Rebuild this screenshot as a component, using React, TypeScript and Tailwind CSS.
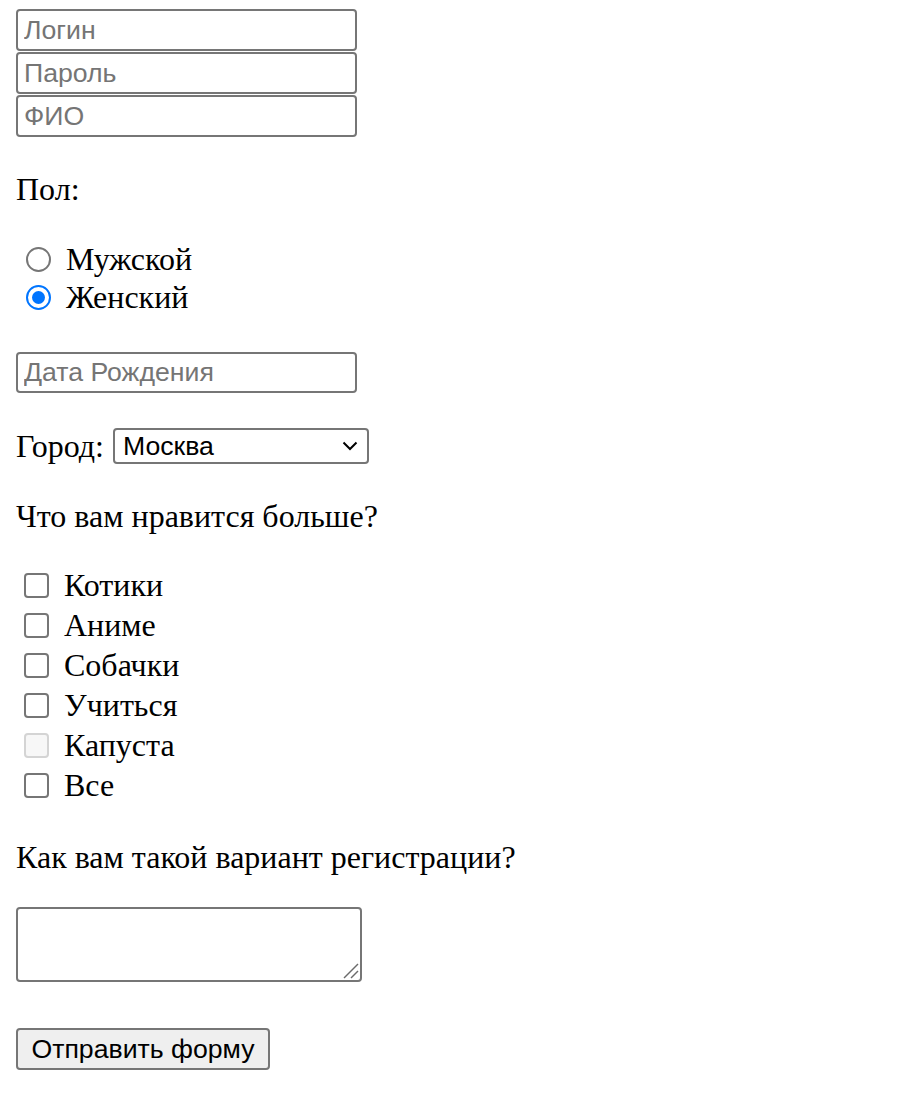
import React from "react";

const serif = "font-['Liberation_Serif','Times_New_Roman',serif]";
const sans = "font-['Liberation_Sans',Arial,sans-serif]";

function TextInput({ placeholder, h = "h-[42px]" }: { placeholder: string; h?: string }) {
  return (
    <input
      placeholder={placeholder}
      className={`${sans} block w-[341px] ${h} border-2 border-[#767676] rounded-[4px] px-[6px] text-[26.67px] text-black placeholder:text-[#757575] bg-white outline-none`}
    />
  );
}

function Radio({ checked }: { checked?: boolean }) {
  if (checked) {
    return (
      <div className="w-[25px] h-[25px] rounded-full border-[2.5px] border-[#0075ff] bg-white flex items-center justify-center shrink-0">
        <div className="w-[13px] h-[13px] rounded-full bg-[#0075ff]" />
      </div>
    );
  }
  return <div className="w-[25px] h-[25px] rounded-full border-2 border-[#767676] bg-white shrink-0" />;
}

function Checkbox({ disabled }: { disabled?: boolean }) {
  return (
    <div
      className={
        disabled
          ? "w-[25px] h-[25px] rounded-[4px] border-2 border-[#d4d4d4] bg-[#f7f7f7] shrink-0"
          : "w-[25px] h-[25px] rounded-[4px] border-2 border-[#767676] bg-white shrink-0"
      }
    />
  );
}

export default function App() {
  const items = ["Котики", "Аниме", "Собачки", "Учиться", "Капуста", "Все"];
  return (
    <div className={`${serif} bg-white text-black min-h-[1117px] px-[16px] pt-[9px] text-[32px] leading-[37px]`}>
      <div className="flex flex-col gap-[1px]">
        <TextInput placeholder="Логин" />
        <TextInput placeholder="Пароль" />
        <TextInput placeholder="ФИО" />
      </div>

      <p className="mt-[34px]">Пол:</p>

      <div className="mt-[32px] flex flex-col">
        <div className="h-[38px] flex items-center pl-[10px] gap-[15px]">
          <Radio />
          <span>Мужской</span>
        </div>
        <div className="h-[39px] flex items-center pl-[10px] gap-[15px]">
          <Radio checked />
          <span>Женский</span>
        </div>
      </div>

      <div className="mt-[35px]">
        <TextInput placeholder="Дата Рождения" h="h-[41px]" />
      </div>

      <div className="mt-[35px] flex items-center gap-[9px] h-[36px]">
        <span>Город:</span>
        <div className={`${sans} w-[256px] h-[36px] border-2 border-[#767676] rounded-[4px] bg-white flex items-center justify-between pl-[8px] pr-[9px] text-[26.67px]`}>
          <span>Москва</span>
          <svg width="16" height="10" viewBox="0 0 16 10" fill="none">
            <path d="M1.5 1.5 L8 8 L14.5 1.5" stroke="#000" strokeWidth="2" />
          </svg>
        </div>
      </div>

      <p className="mt-[34px]">Что вам нравится больше?</p>

      <div className="mt-[30px] flex flex-col">
        {items.map((t) => (
          <div key={t} className="h-[40px] flex items-center pl-[8px] gap-[15px]">
            <Checkbox disabled={t === "Капуста"} />
            <span>{t}</span>
          </div>
        ))}
      </div>

      <p className="mt-[34px]">Как вам такой вариант регистрации?</p>

      <div className="mt-[31px] relative w-[346px] h-[75px] border-2 border-[#767676] rounded-[4px] bg-white">
        <svg className="absolute right-[1px] bottom-[1px]" width="16" height="16" viewBox="0 0 16 16" fill="none">
          <path d="M15 1 L1 15" stroke="#6b6b6b" strokeWidth="1.5" />
          <path d="M15 8 L8 15" stroke="#6b6b6b" strokeWidth="1.5" />
        </svg>
      </div>

      <button
        className={`${sans} mt-[46px] block w-[254px] h-[42px] border-2 border-[#767676] rounded-[4px] bg-[#efefef] text-[26.67px] text-black`}
      >
        Отправить форму
      </button>
    </div>
  );
}
